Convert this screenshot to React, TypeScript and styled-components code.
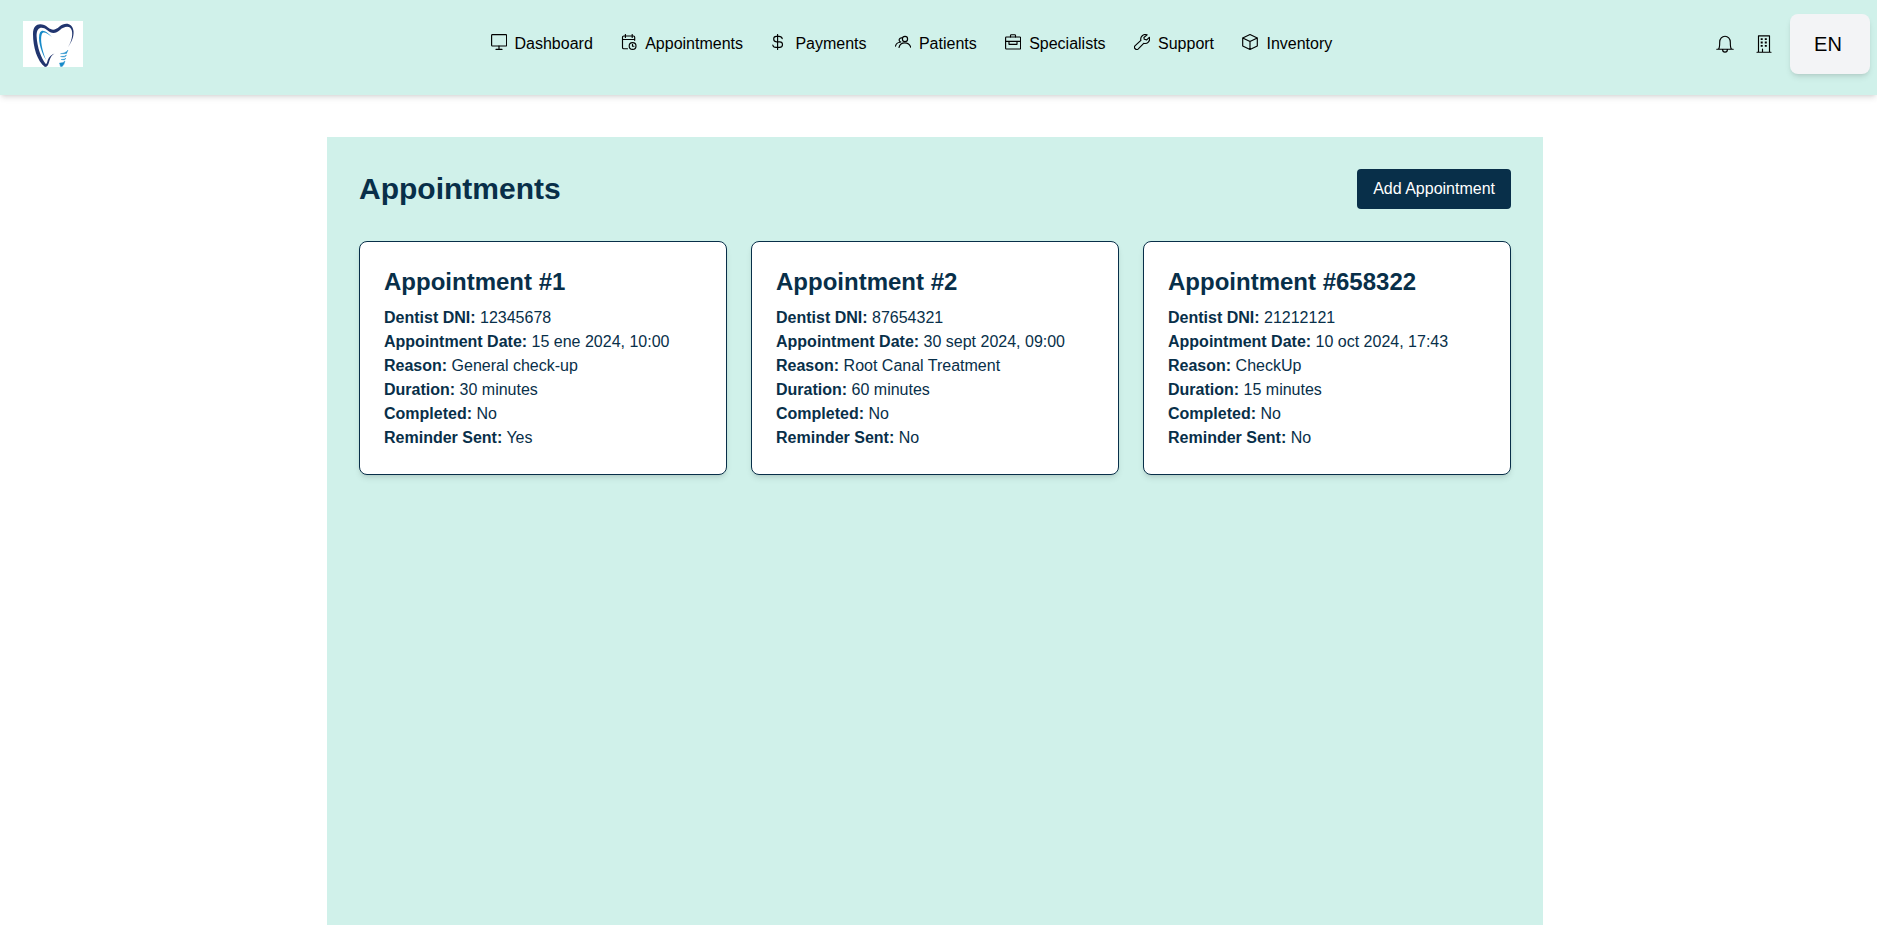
import React from 'react';
import styled, { createGlobalStyle } from 'styled-components';

const Global = createGlobalStyle`
  *, *::before, *::after { box-sizing: border-box; }
  body { margin: 0; background: #fff; font-family: "Liberation Sans", Arial, sans-serif; font-size: 16px; line-height: 24px; }
  h1, h2, p { margin: 0; }
  button { font-family: inherit; border: 0; cursor: pointer; }
`;

const Page = styled.div`
  height: 925px;
  display: flex;
  flex-direction: column;
  overflow: hidden;
`;

const Header = styled.header`
  height: 95px;
  flex: none;
  display: flex;
  align-items: flex-start;
  justify-content: space-between;
  padding: 14px 7px 0 23px;
  background: #d0f1ea;
  box-shadow: 0 4px 6px -1px rgba(0, 0, 0, 0.1), 0 2px 4px -2px rgba(0, 0, 0, 0.1);
`;

const Logo = styled.svg`
  display: block;
  flex: none;
  width: 60px;
  height: 46px;
  margin-top: 7px;
`;

const Nav = styled.nav`
  display: flex;
  flex: 1;
  gap: 28.4px;
  margin-top: 18px;
  margin-left: 407.5px;
`;

const NavLink = styled.a`
  display: flex;
  gap: 8px;
  color: #000;
  white-space: nowrap;
`;

const Glyph = styled.svg<{ $size?: number }>`
  display: block;
  flex: none;
  width: ${(p) => p.$size ?? 16}px;
  height: ${(p) => p.$size ?? 16}px;
  margin-top: 2px;
  fill: none;
  stroke: #000;
  stroke-width: 1.15;
  stroke-linecap: round;
  stroke-linejoin: round;
`;

const Actions = styled.div`
  display: flex;
  justify-content: flex-end;
  align-items: center;
  height: 60px;
  gap: 17px;
`;

const StatusIcons = styled.div`
  display: flex;
  gap: 21px;
  margin-bottom: 2px;
`;

const LanguageButton = styled.button`
  width: 80px;
  height: 60px;
  padding: 0 4px 0 0;
  border-radius: 8px;
  background: #f3f4f6;
  color: #000;
  font-size: 20px;
  line-height: 28px;
  box-shadow: 0 4px 6px -1px rgba(0, 0, 0, 0.1), 0 2px 4px -2px rgba(0, 0, 0, 0.1);
`;

const Panel = styled.main`
  width: 1216px;
  flex: 1;
  margin: 42px 0 0 327px;
  padding: 32px;
  background: #d0f1ea;
  color: #082f49;
`;

const TitleRow = styled.div`
  display: flex;
  justify-content: space-between;
  align-items: center;
  height: 40px;
  margin-bottom: 32px;
`;

const Title = styled.h1`
  font-size: 30px;
  line-height: 36px;
  font-weight: 700;
`;

const AddButton = styled.button`
  height: 40px;
  padding: 0 16px;
  border-radius: 4px;
  background: #082f49;
  color: #fff;
  font-size: 16px;
  line-height: 24px;
`;

const Cards = styled.div`
  display: grid;
  grid-template-columns: repeat(3, 1fr);
  gap: 24px;
`;

const Card = styled.article`
  padding: 24px;
  border: 1px solid #082f49;
  border-radius: 8px;
  background: #fff;
  box-shadow: 0 4px 6px -1px rgba(0, 0, 0, 0.1), 0 2px 4px -2px rgba(0, 0, 0, 0.1);
`;

const CardTitle = styled.h2`
  margin-bottom: 8px;
  font-size: 24px;
  line-height: 32px;
  font-weight: 700;
`;

const icons = {
  dashboard: <><rect x=".6" y=".6" width="15" height="11.4" rx=".8" /><path d="M8 12v3.3M5 15.4h6" /></>,
  appointments: <><path d="M6.5 14.7H2.8a1.3 1.3 0 0 1-1.3-1.3V3.3A1.3 1.3 0 0 1 2.8 2h9.6a1.3 1.3 0 0 1 1.3 1.3v3M1.5 5.5h12.2M4.4.5v3M11.2.5v3" /><circle cx="11.6" cy="12" r="3.4" /><path d="M11.5 10.3v1.9h1.4" /></>,
  payments: <path d="M6.6.5v15M11.2 4.6C10.9 3.2 9.6 2.4 8 2.4H5.4a2.7 2.7 0 0 0 0 5.4H8.7a2.8 2.8 0 0 1 0 5.6H5C3.3 13.4 2 12.6 1.8 11" />,
  patients: <><circle cx="10" cy="4.9" r="2.6" /><path d="M4 13.5c.8-3 2.8-4.600 5.700-4.600s5.200 1.700 6.100 4.400M5.900 8a2.100 2.100 0 1 1 .9-4.100M.5 12.200c.4-2.300 2-3.800 4.600-4" /></>,
  specialists: <><rect x=".6" y="3" width="15" height="12" rx=".8" /><path d="M5.500 3V1.500a.8.8 0 0 1 .8-.8h3.400a.8.8 0 0 1 .8.8V3M.6 7.400h15M4 7.400v2.900h8V7.400" /></>,
  support: <path d="M13.100.9a4.600 4.600 0 0 0-6.200 5.500L1.200 11.600a2.200 2.200 0 0 0 3.100 3.200l5.400-5.500a4.600 4.600 0 0 0 5.600-6L12.700 5.900 10.300 5.300 9.900 3.500z" />,
  inventory: <path d="M8 .6l7.300 3.300v8L8 15.400.7 11.900v-8zM.7 3.900L8 7.400l7.300-3.500M8 7.400v8" />,
};

const navItems: { label: string; icon: keyof typeof icons }[] = [
  { label: 'Dashboard', icon: 'dashboard' },
  { label: 'Appointments', icon: 'appointments' },
  { label: 'Payments', icon: 'payments' },
  { label: 'Patients', icon: 'patients' },
  { label: 'Specialists', icon: 'specialists' },
  { label: 'Support', icon: 'support' },
  { label: 'Inventory', icon: 'inventory' },
];

const appointments = [
  { id: 1, dni: '12345678', date: '15 ene 2024, 10:00', reason: 'General check-up', duration: 30, completed: false, reminder: true },
  { id: 2, dni: '87654321', date: '30 sept 2024, 09:00', reason: 'Root Canal Treatment', duration: 60, completed: false, reminder: false },
  { id: 658322, dni: '21212121', date: '10 oct 2024, 17:43', reason: 'CheckUp', duration: 15, completed: false, reminder: false },
];

const yesNo = (value: boolean) => (value ? 'Yes' : 'No');

function ToothLogo() {
  return (
    <Logo viewBox="0 0 60 46" aria-label="Dental clinic">
      <rect width="60" height="46" fill="#fff" />
      <path d="M45 26C49 21 51 15 50.500 10C49.500 2 42 1 36.500 5.500C32 9.500 29 9.500 25 6.500C19 1.500 10 1.500 10 13C10 26 14 40 22 46C25 46 25.500 43 26.500 39.500C27.500 36 29 34 31.500 32.500C28.500 33.500 26 36 24.800 39C24 41.500 23.800 43 22.800 43C18.500 38 14 26 13.600 15C13.400 6 19 5 24 9C28.500 13 32.500 13 37 9C41 5.500 47 4 48.800 9.500C50 14 48.500 21 45 26Z" fill="#21356f" />
      <path d="M29 16C24 11 19.500 7.500 17 11.500C14.500 17 17 29 23 39C19 29 17 19 18.700 13.500C20 9.500 24 12.500 29 16Z" fill="#168ac9" />
      <path d="M45 29l-1.500 3.500-6 .2c3-.5 5.500-1 7.500-3.700zM37.500 35.500q4 .3 6-1.500-1 3-6 1.500zM38 38.500q3.500 0 5-1.200-1 2.500-5 1.200zM36.500 42q4 .2 5.500-2-.8 4-2.800 5.500h-1.700z" fill="#168ac9" stroke="#168ac9" strokeWidth=".4" />
    </Logo>
  );
}

export default function App() {
  return (
    <Page>
      <Global />
      <Header>
        <ToothLogo />
        <Nav>
          {navItems.map(({ label, icon }) => (
            <NavLink key={label}>
              <Glyph viewBox="0 0 16 16">{icons[icon]}</Glyph>
              {label}
            </NavLink>
          ))}
        </Nav>
        <Actions>
          <StatusIcons>
            <Glyph viewBox="0 0 18 18" $size={18}>
              <path d="M.8 14.200h16.400M2.600 14C3.700 12.800 3.700 11.500 3.700 7a5.300 5.800 0 0 1 10.600 0c0 4.500 0 5.800 1.100 7M6.600 14.500a2.400 2.600 0 0 0 4.800 0" />
            </Glyph>
            <Glyph viewBox="0 0 18 18" $size={18}>
              <path d="M3.500 17V.8h11V17M2 17.200h14M7.500 17v-3" />
              <path d="M5.700 4.200h2M9.800 4.200h2M5.700 7.500h2M9.800 7.500h2M5.700 10.800h2M9.800 10.800h2" strokeWidth="1.800" strokeLinecap="butt" />
            </Glyph>
          </StatusIcons>
          <LanguageButton>EN</LanguageButton>
        </Actions>
      </Header>
      <Panel>
        <TitleRow>
          <Title>Appointments</Title>
          <AddButton>Add Appointment</AddButton>
        </TitleRow>
        <Cards>
          {appointments.map((a) => (
            <Card key={a.id}>
              <CardTitle>Appointment #{a.id}</CardTitle>
              <p><strong>Dentist DNI:</strong> {a.dni}</p>
              <p><strong>Appointment Date:</strong> {a.date}</p>
              <p><strong>Reason:</strong> {a.reason}</p>
              <p><strong>Duration:</strong> {a.duration} minutes</p>
              <p><strong>Completed:</strong> {yesNo(a.completed)}</p>
              <p><strong>Reminder Sent:</strong> {yesNo(a.reminder)}</p>
            </Card>
          ))}
        </Cards>
      </Panel>
    </Page>
  );
}
